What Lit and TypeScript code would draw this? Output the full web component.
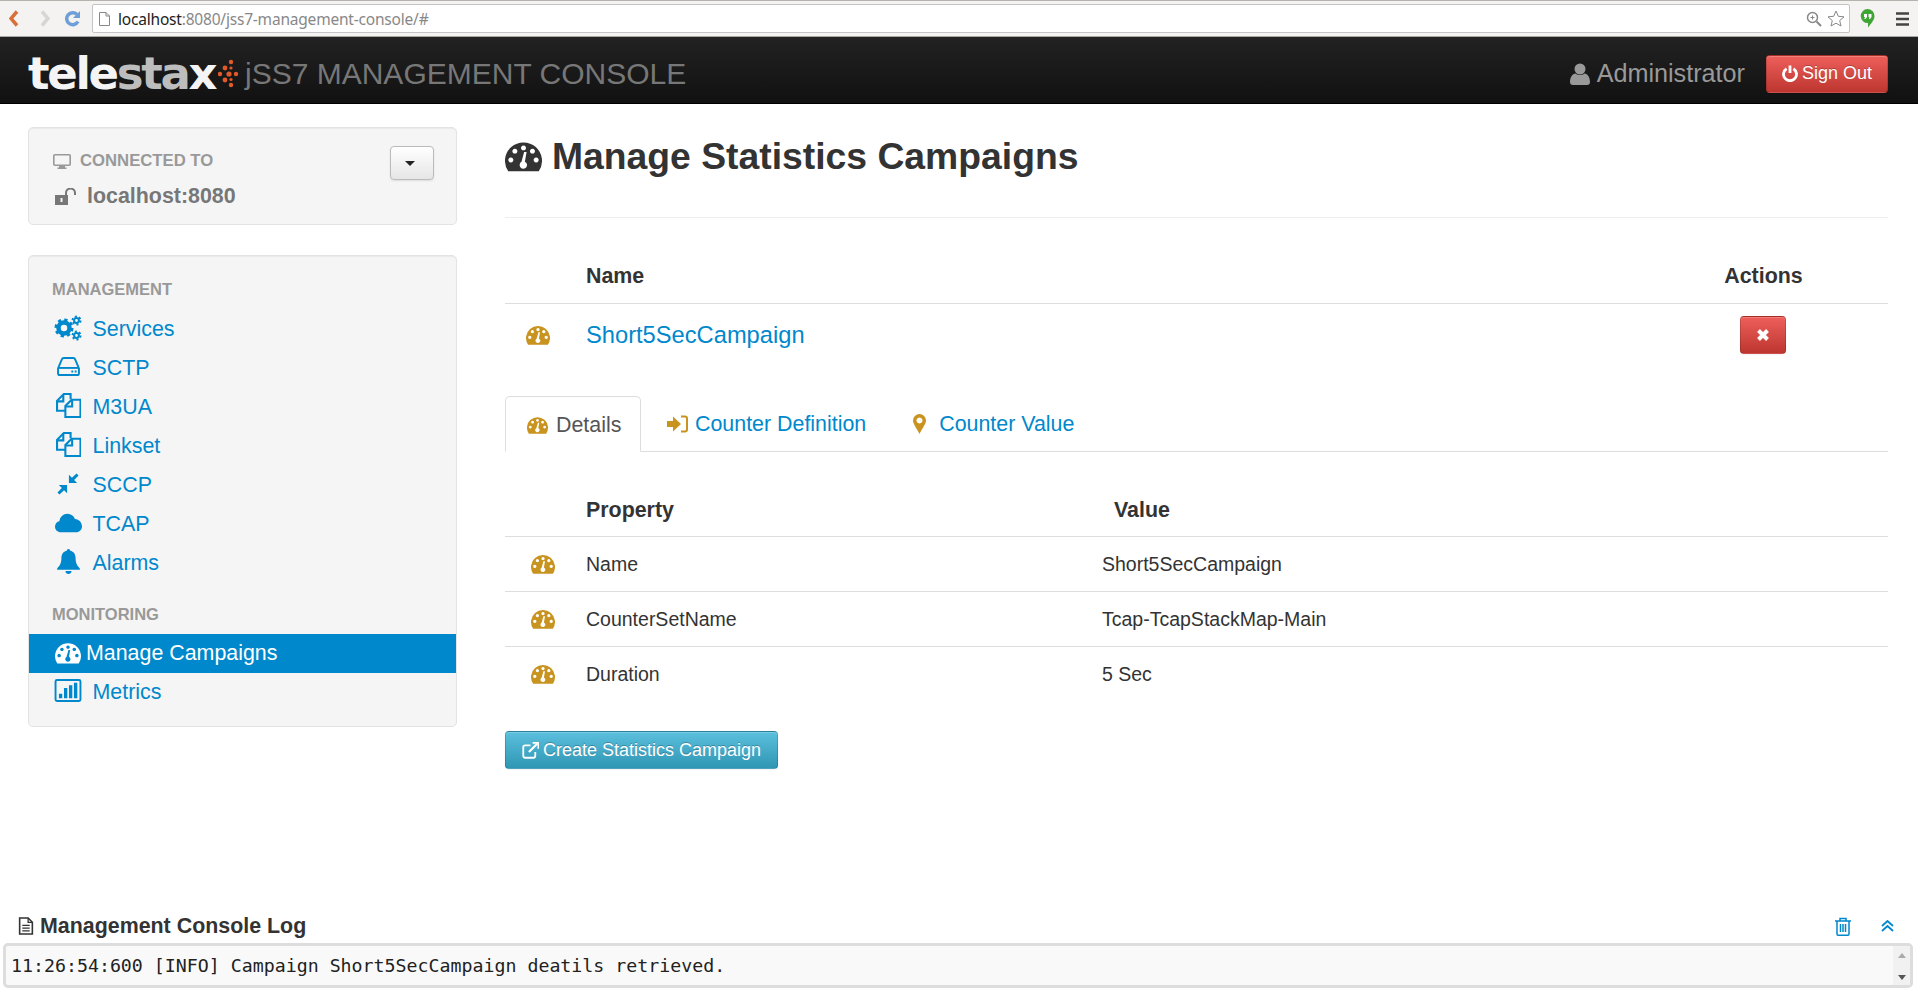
import {LitElement, css, html} from 'lit';
import {customElement} from 'lit/decorators.js';

const gauge = (cls = '') => html`<svg class="ic ${cls}" viewBox="0 0.9 24 19">
  <path
    fill="currentColor"
    fill-rule="evenodd"
    d="M2.1 19.7A12 12 0 1 1 21.9 19.7ZM12 2.9a1.6 1.6 0 1 0 .01 0ZM6.4 5a1.6 1.6 0 1 0 .01 0ZM17.8 5a1.6 1.6 0 1 0 .01 0ZM3.8 10.7a1.6 1.6 0 1 0 .01 0ZM20.2 10.7a1.6 1.6 0 1 0 .01 0ZM14 7.2L12.9 13.4a2.4 2.4 0 1 1-2.2 .1L12.4 7.2Z"
  />
</svg>`;

const cogs = html`<svg class="ic" width="28" height="26" viewBox="0 0 28 26" fill="none" stroke="currentColor">
  <circle cx="10" cy="13" r="5.5" stroke-width="4.5" />
  <circle cx="10" cy="13" r="8" stroke-width="3" stroke-dasharray="3.2 3.08" />
  <circle cx="22.5" cy="5.5" r="2.4" stroke-width="2" />
  <circle cx="22.5" cy="5.5" r="4" stroke-width="2" stroke-dasharray="2 2.19" />
  <circle cx="22.5" cy="20.5" r="2.4" stroke-width="2" />
  <circle cx="22.5" cy="20.5" r="4" stroke-width="2" stroke-dasharray="2 2.19" />
</svg>`;

const hdd = html`<svg class="ic" width="23" height="19" viewBox="1 1 24 20" fill="none" stroke="currentColor" stroke-width="2">
  <path d="M2 13L6 3.5C6.3 2.5 7 2 8 2H18C19 2 19.7 2.5 20 3.5L24 13V18C24 19.5 23 20 22 20H4C3 20 2 19.5 2 18Z" />
  <path d="M2 12.5H24" />
  <path d="M16 16.3h2M19.5 16.3h2" />
</svg>`;

const copy = html`<svg class="ic" width="25" height="25" viewBox="1 1 24 24" fill="none" stroke="currentColor" stroke-width="2">
  <path d="M10 18H2V8.5L8.5 2H15V7" />
  <path d="M8 2.5V9H2" />
  <path d="M10 24V13.5L16 7.5H24.5V24Z" />
  <path d="M16.5 8V14H10.5" />
</svg>`;

const compress = html`<svg class="ic" width="22" height="22" viewBox="1 1 24 24" fill="currentColor">
  <path d="M14 3V12H23L19.7 8.7 24.5 3.7 22.3 1.5 17.3 6.3Z" />
  <path d="M12 14V23L8.7 19.7 3.7 24.5 1.5 22.3 6.3 17.3 3 14Z" />
</svg>`;

const cloud = html`<svg class="ic" width="27" height="20" viewBox="0 2 28 19">
  <path fill="currentColor" d="M6 21C2.7 21 0 18.5 0 15.3 0 12.5 2 10.2 4.6 9.8 5 5.5 8.5 2 13 2 16.5 2 19.5 4.2 20.7 7.3 25 7.5 28 11 28 15 28 18.3 25.3 21 22 21Z" />
</svg>`;

const bell = html`<svg class="ic" width="23" height="25" viewBox="1 1 24 26.4">
  <path fill="currentColor" d="M13 1C14 1 14.8 1.8 14.8 2.8 18.5 3.5 20.5 6.5 20.5 10.5 20.5 16 22 18.5 25 21.5V23H1V21.5C4 18.5 5.5 16 5.5 10.5 5.5 6.5 7.5 3.5 11.2 2.8 11.2 1.8 12 1 13 1ZM9.8 24.2H16.2C16.2 26 14.8 27.4 13 27.4 11.2 27.4 9.8 26 9.8 24.2Z" />
</svg>`;

const chart = html`<svg class="ic" width="28" height="23" viewBox="0 0 28 24">
  <rect x="1" y="1" width="26" height="22" rx="1.5" fill="none" stroke="currentColor" stroke-width="2" />
  <path fill="currentColor" d="M4.5 15.5h3.5v4.5h-3.5zM9.8 9.5h3.5v10.5h-3.5zM15 6.5h3.5v13.5h-3.5zM20.2 4h3.5v16h-3.5z" />
</svg>`;

const nav = [
  {label: 'Services', icon: cogs},
  {label: 'SCTP', icon: hdd},
  {label: 'M3UA', icon: copy},
  {label: 'Linkset', icon: copy},
  {label: 'SCCP', icon: compress},
  {label: 'TCAP', icon: cloud},
  {label: 'Alarms', icon: bell},
];

const properties = [
  {name: 'Name', value: 'Short5SecCampaign'},
  {name: 'CounterSetName', value: 'Tcap-TcapStackMap-Main'},
  {name: 'Duration', value: '5 Sec'},
];

@customElement('app-root')
export class AppRoot extends LitElement {
  static styles = css`
    :host {
      display: flex;
      flex-direction: column;
      height: 990px;
      overflow: hidden;
      background: #fff;
      color: #333;
      font-family: 'Liberation Sans', Arial, sans-serif;
      font-size: 18px;
    }

    a {
      color: #08c;
      text-decoration: none;
    }

    .ic {
      display: block;
      flex: none;
    }

    .g38 {
      width: 37px;
      height: 30px;
    }

    .g26 {
      width: 26px;
      height: 21px;
    }

    .g24 {
      width: 24px;
      height: 19px;
    }

    .g21 {
      width: 21px;
      height: 17px;
    }

    /* browser chrome */
    .browser {
      display: flex;
      flex: none;
      align-items: center;
      box-sizing: border-box;
      height: 37px;
      padding-right: 9px;
      border-top: 1px solid #b5b3ae;
      border-bottom: 1px solid #a9a7a3;
      background: #f4f3f1;
    }

    .browser-nav {
      display: flex;
      flex: none;
      align-items: center;
      gap: 14px;
      width: 92px;
      padding-left: 9px;
      box-sizing: border-box;
    }

    .browser-nav .fwd {
      margin-left: 7px;
    }

    .urlbar {
      display: flex;
      flex: 1;
      align-items: center;
      gap: 5px;
      height: 27px;
      padding: 0 4px 0 6px;
      border: 1px solid #c4c4c4;
      border-radius: 2px;
      background: #fff;
      font-family: 'Noto Sans', 'Liberation Sans', sans-serif;
      font-size: 15.5px;
      color: #888;
    }

    .urlbar b {
      font-weight: 400;
      color: #222;
    }

    .url {
      flex: 1;
      letter-spacing: -0.2px;
      margin-left: 3px;
    }

    .browser-ext {
      display: flex;
      flex: none;
      align-items: center;
      gap: 21px;
      padding-left: 10px;
    }

    /* top navbar */
    .navbar {
      display: flex;
      flex: none;
      align-items: center;
      height: 67px;
      padding: 7px 30px 0 28px;
      box-sizing: border-box;
      background: linear-gradient(#222, #111);
      border-bottom: 1px solid #000;
    }

    .logo {
      display: flex;
      align-items: center;
      gap: 3px;
      width: 217px;
      font-family: 'DejaVu Sans', sans-serif;
      font-size: 45px;
      font-weight: 700;
      letter-spacing: -2.3px;
      line-height: 1;
      color: #f4f4f4;
    }

    .logo i {
      font-style: normal;
      color: #bdbdbd;
    }

    .brand {
      flex: 1;
      font-size: 30px;
      color: #777;
    }

    .user {
      display: flex;
      align-items: center;
      gap: 7px;
      margin-right: 21px;
      font-size: 25.2px;
      color: #999;
    }

    .btn {
      display: inline-flex;
      align-items: center;
      justify-content: center;
      box-sizing: border-box;
      border: 1px solid rgba(0, 0, 0, 0.15);
      border-radius: 4px;
      color: #fff;
      text-shadow: 0 -1px 0 rgba(0, 0, 0, 0.25);
      box-shadow: inset 0 1px 0 rgba(255, 255, 255, 0.2), 0 1px 2px rgba(0, 0, 0, 0.05);
    }

    .btn-danger {
      background: linear-gradient(#ee5f5b, #bd362f);
    }

    .signout {
      gap: 4px;
      width: 122px;
      height: 38px;
      font-size: 18px;
    }

    .delete {
      width: 46px;
      height: 38px;
    }

    /* page body */
    .page {
      display: flex;
      flex: 1;
      gap: 48px;
      padding: 23px 30px 0 28px;
      min-height: 0;
    }

    .sidebar {
      display: flex;
      flex: none;
      flex-direction: column;
      gap: 30px;
      width: 429px;
    }

    .well {
      box-sizing: border-box;
      border: 1px solid #e3e3e3;
      border-radius: 5px;
      background: #f5f5f5;
      box-shadow: inset 0 1px 1px rgba(0, 0, 0, 0.05);
    }

    .conn {
      display: flex;
      justify-content: space-between;
      height: 98px;
      padding: 18px 22px 0 24px;
      color: #777;
    }

    .conn-label {
      display: flex;
      align-items: center;
      gap: 9px;
      height: 20px;
      margin-top: 5px;
      font-size: 16.7px;
      font-weight: 700;
      color: #999;
    }

    .conn-host {
      display: flex;
      align-items: center;
      gap: 11px;
      margin: 13px 0 0 2px;
      font-size: 21.4px;
      font-weight: 700;
    }

    .caret-btn {
      width: 42px;
      height: 32px;
      border: 1px solid #bbb;
      border-radius: 4px;
      background: linear-gradient(#fff, #e6e6e6);
      box-shadow: 0 1px 2px rgba(0, 0, 0, 0.1);
      display: flex;
      align-items: center;
      justify-content: center;
    }

    .caret {
      width: 0;
      height: 0;
      margin-left: -4px;
      border-left: 5px solid transparent;
      border-right: 5px solid transparent;
      border-top: 5px solid #222;
    }

    .menu {
      height: 472px;
      padding-top: 22px;
    }

    .menu-head {
      height: 22px;
      padding-left: 23px;
      line-height: 22px;
      font-size: 16.5px;
      font-weight: 700;
      color: #999;
    }

    .monitoring {
      margin-top: 20px;
      margin-bottom: 9px;
    }

    .item {
      display: flex;
      align-items: center;
      gap: 10.5px;
      height: 39px;
      padding-left: 25px;
      font-size: 21.4px;
    }

    .item-icon {
      display: flex;
      justify-content: center;
      width: 28px;
      margin-bottom: 4px;
      color: #08c;
    }

    .items {
      padding-top: 10px;
    }

    .item.active {
      gap: 4px;
      background: #08c;
      color: #fff;
    }

    .item.active .item-icon {
      margin-bottom: 0;
      color: #fff;
    }

    /* main column */
    .main {
      flex: 1;
      min-width: 0;
    }

    .title {
      display: flex;
      align-items: center;
      gap: 10px;
      height: 91px;
      padding-bottom: 30px;
      box-sizing: border-box;
      border-bottom: 1px solid #eee;
    }

    h1 {
      margin: 0;
      font-size: 37.3px;
      line-height: 1;
      font-weight: 700;
      color: #333;
    }

    .grid-row {
      display: grid;
      align-items: center;
      box-sizing: border-box;
      border-bottom: 1px solid #ddd;
    }

    .gold {
      color: #c9931f;
    }

    .camps {
      margin-top: 29px;
    }

    .camps .grid-row {
      grid-template-columns: 66px 1fr 131px 59px;
    }

    .camps .head {
      height: 57px;
      padding-top: 2px;
      font-size: 21.4px;
      font-weight: 700;
    }

    .camps .body {
      height: 62px;
      border-bottom: none;
      font-size: 23.7px;
    }

    .center {
      justify-self: center;
    }

    .camps .name {
      padding-left: 15px;
    }

    .camps .delete {
      margin-right: 1px;
    }

    .icon-cell {
      justify-self: center;
    }

    .tabs {
      display: flex;
      align-items: flex-end;
      height: 56px;
      margin-top: 29px;
      border-bottom: 1px solid #ddd;
      font-size: 21.4px;
    }

    .tab {
      display: flex;
      align-items: center;
      gap: 7px;
      box-sizing: border-box;
      height: 56px;
      padding-top: 2px;
    }

    .tab.active {
      gap: 8px;
      width: 136px;
      margin-bottom: -1px;
      padding-left: 21px;
      border: 1px solid #ddd;
      border-bottom: 1px solid #fff;
      border-radius: 5px 5px 0 0;
      color: #555;
    }

    .tab.def {
      margin-left: 26px;
    }

    .tab.val {
      gap: 13px;
      margin-left: 47px;
    }

    .props .grid-row {
      grid-template-columns: 81px 516px 1fr;
      height: 55px;
      font-size: 19.5px;
    }

    .props .icon-cell {
      margin-right: 5px;
    }

    .props .head {
      height: 85px;
      padding-top: 32px;
      font-size: 21.4px;
      font-weight: 700;
    }

    .props .head .val-head {
      padding-left: 12px;
    }

    .props .last {
      border-bottom: none;
    }

    .create {
      gap: 4px;
      width: 273px;
      height: 38px;
      margin-top: 29px;
      background: linear-gradient(#5bc0de, #2f96b4);
      font-size: 18px;
    }

    /* console log */
    .log {
      flex: none;
      padding: 0 5px 2px 3px;
    }

    .log-head {
      display: flex;
      align-items: center;
      height: 28px;
      padding: 0 19px 0 15px;
      margin-bottom: 3px;
    }

    .log-title {
      display: flex;
      flex: 1;
      align-items: center;
      gap: 6px;
      font-size: 21.4px;
      font-weight: 700;
    }

    .log-actions {
      display: flex;
      align-items: center;
      gap: 30px;
      color: #08c;
    }

    .log-box {
      display: flex;
      box-sizing: border-box;
      height: 45px;
      border: 3px solid #ddd;
      border-radius: 5px;
      background: #f9f9f9;
    }

    .log-text {
      flex: 1;
      padding: 9px 0 0 5px;
      font-family: 'DejaVu Sans Mono', monospace;
      font-size: 18.25px;
      color: #222;
      white-space: pre;
    }

    .scrollbar {
      display: flex;
      flex-direction: column;
      align-items: center;
      justify-content: space-between;
      box-sizing: border-box;
      width: 17px;
      padding: 7px 0 5px;
      background: #f1f1f1;
    }

    .tri-up {
      border-left: 4px solid transparent;
      border-right: 4px solid transparent;
      border-bottom: 5px solid #aaa;
    }

    .tri-down {
      border-left: 4px solid transparent;
      border-right: 4px solid transparent;
      border-top: 5px solid #555;
    }
  `;

  renderBrowser() {
    return html`<div class="browser">
      <div class="browser-nav">
        <svg class="ic" width="10" height="17" viewBox="0 0 10 17"><path d="M8 1.5L2 8.5 8 15.5" fill="none" stroke="#d9703a" stroke-width="3.5" /></svg>
        <svg class="ic fwd" width="10" height="17" viewBox="0 0 10 17"><path d="M2 1.5L8 8.5 2 15.5" fill="none" stroke="#d8d6d2" stroke-width="3.5" /></svg>
        <svg class="ic" width="17" height="17" viewBox="0 0 17 17"><path d="M14 11.5A6 6 0 1 1 13 4.5" fill="none" stroke="#6e9fd6" stroke-width="3.5" /><path d="M16 1V8H9Z" fill="#6e9fd6" /></svg>
      </div>
      <div class="urlbar">
        <svg class="ic" width="11" height="14" viewBox="0 0 11 14"><path d="M.5.5H7L10.5 4V13.5H.5Z" fill="#fff" stroke="#888" /><path d="M7 .5V4H10.5" fill="none" stroke="#888" /></svg>
        <span class="url"><b>localhost</b>:8080/jss7-management-console/#</span>
        <svg class="ic" width="16" height="16" viewBox="0 0 16 16"><circle cx="6.5" cy="6.5" r="5" fill="none" stroke="#888" stroke-width="1.5" /><path d="M10.5 10.5L15 15" stroke="#888" stroke-width="2" /><path d="M4.5 6.5h4M6.5 4.5v4" stroke="#888" /></svg>
        <svg class="ic" width="18" height="17" viewBox="0 0 18 17"><path d="M9 1L11.3 6.3 17 6.8 12.7 10.6 14 16 9 13.2 4 16 5.3 10.6 1 6.8 6.7 6.3Z" fill="#fff" stroke="#888" /></svg>
      </div>
      <div class="browser-ext">
        <svg class="ic" width="15" height="19" viewBox="0 0 15 19"><path d="M7.5 0A7 7 0 0 1 14.5 7C14.5 11 11 14.5 8 18.5V14A7 7 0 0 1 7.5 0Z" fill="#3fa535" /><path d="M4 5h3v3l-1.5 2H4.3L5 8H4zM8.5 5h3v3L10 10H8.8L9.5 8h-1z" fill="#fff" /></svg>
        <svg class="ic" width="13" height="14" viewBox="0 0 13 14"><path d="M0 1.5h13M0 7h13M0 12.5h13" stroke="#444" stroke-width="2.5" /></svg>
      </div>
    </div>`;
  }

  renderNavbar() {
    return html`<div class="navbar">
      <div class="logo">
        <span>tele<i>sta</i>x</span>
        <svg class="ic" width="21" height="29" viewBox="0 0 21 29" fill="#e2592a">
          <circle cx="13" cy="3" r="2.2" /><circle cx="7" cy="9" r="2.4" /><circle cx="13" cy="9" r="1.6" />
          <circle cx="2" cy="15" r="2.2" /><circle cx="11" cy="15" r="2.6" /><circle cx="18" cy="15" r="2.2" />
          <circle cx="7" cy="21" r="2.4" /><circle cx="13" cy="20.5" r="1.6" /><circle cx="13" cy="26" r="2.2" />
        </svg>
      </div>
      <div class="brand">jSS7 MANAGEMENT CONSOLE</div>
      <div class="user">
        <svg class="ic" width="20" height="22" viewBox="0 0 20 22" fill="#999"><circle cx="10" cy="6" r="5.5" /><path d="M0 19C0 14 2.5 11 5.5 10.5 8 12.5 12 12.5 14.5 10.5 17.5 11 20 14 20 19 20 21 19 22 17 22H3C1 22 0 21 0 19Z" /></svg>
        Administrator
      </div>
      <a class="btn btn-danger signout">
        <svg class="ic" width="16" height="17" viewBox="0 0 16 17" fill="none" stroke="#fff" stroke-width="2.8"><path d="M4.6 3.7A6.5 6.5 0 1 0 11.4 3.7" /><path d="M8 .5V8" /></svg>
        Sign Out
      </a>
    </div>`;
  }

  renderSidebar() {
    return html`<div class="sidebar">
      <div class="well conn">
        <div>
          <div class="conn-label">
            <svg class="ic" width="18" height="15" viewBox="0 0 18 15"><rect x=".8" y=".8" width="16.4" height="10.4" rx="1" fill="none" stroke="#999" stroke-width="1.6" /><path d="M6 12h6v1.5h1.5V15h-9v-1.5H6Z" fill="#999" /></svg>
            CONNECTED TO
          </div>
          <div class="conn-host">
            <svg class="ic" width="21" height="17" viewBox="0 0 21 17" fill="#777"><path d="M0 7h13v10H0ZM5.5 10v4h2v-4Z" fill-rule="evenodd" /><path d="M11 7V5A4.5 4.5 0 0 1 20 5V7" fill="none" stroke="#777" stroke-width="2" /></svg>
            localhost:8080
          </div>
        </div>
        <div class="caret-btn"><span class="caret"></span></div>
      </div>
      <div class="well menu">
        <div class="menu-head">MANAGEMENT</div>
        <div class="items">
          ${nav.map(
            (n) => html`<a class="item">
              <span class="item-icon">${n.icon}</span>${n.label}
            </a>`
          )}
        </div>
        <div class="menu-head monitoring">MONITORING</div>
        <a class="item active"><span class="item-icon">${gauge('g26')}</span>Manage Campaigns</a>
        <a class="item"><span class="item-icon">${chart}</span>Metrics</a>
      </div>
    </div>`;
  }

  renderMain() {
    return html`<div class="main">
      <div class="title">${gauge('g38')}<h1>Manage Statistics Campaigns</h1></div>
      <div class="camps">
        <div class="grid-row head"><span></span><span class="name">Name</span><span class="center">Actions</span><span></span></div>
        <div class="grid-row body">
          <span class="icon-cell gold">${gauge('g24')}</span>
          <a class="name">Short5SecCampaign</a>
          <a class="btn btn-danger delete center">
            <svg class="ic" width="14" height="14" viewBox="0 0 14 14"><path d="M2.5 2.5L11.5 11.5M11.5 2.5L2.5 11.5" stroke="#fff" stroke-width="4" /></svg>
          </a>
          <span></span>
        </div>
      </div>
      <div class="tabs">
        <div class="tab active"><span class="gold">${gauge('g21')}</span>Details</div>
        <a class="tab def">
          <svg class="ic gold" width="21" height="18" viewBox="0 0 21 18" fill="currentColor"><path d="M0 6h6V1.5L14 9 6 16.5V12H0Z" /><path d="M14 1.5h4C19.5 1.5 20 2.5 20 3.5V14.5C20 15.5 19.5 16.5 18 16.5H14" fill="none" stroke="currentColor" stroke-width="2" /></svg>
          Counter Definition
        </a>
        <a class="tab val">
          <svg class="ic gold" width="13" height="20" viewBox="0 0 13 20" fill="currentColor"><path fill-rule="evenodd" d="M6.5 0A6.5 6.5 0 0 1 13 6.5C13 10 8.5 15.5 6.5 20 4.5 15.5 0 10 0 6.5A6.5 6.5 0 0 1 6.5 0ZM6.5 3.5A3 3 0 1 0 6.51 3.5Z" /></svg>
          Counter Value
        </a>
      </div>
      <div class="props">
        <div class="grid-row head"><span></span><span>Property</span><span class="val-head">Value</span></div>
        ${properties.map(
          (p, i) => html`<div class="grid-row ${i === properties.length - 1 ? 'last' : ''}">
            <span class="icon-cell gold">${gauge('g24')}</span>
            <span>${p.name}</span>
            <span>${p.value}</span>
          </div>`
        )}
      </div>
      <a class="btn create">
        <svg class="ic" width="17" height="17" viewBox="0 0 16 16" fill="none" stroke="#fff" stroke-width="1.7"><path d="M12.5 9.5V13C12.5 14 12 14.8 11 14.8H3C2 14.8 1.2 14 1.2 13V5C1.2 4 2 3.2 3 3.2H8" /><path d="M6.5 9.5L14.5 1.5" stroke-width="2" /><path d="M10 .8H15.5V6.3" stroke-width="1.8" /></svg>
        Create Statistics Campaign
      </a>
    </div>`;
  }

  renderLog() {
    return html`<div class="log">
      <div class="log-head">
        <div class="log-title">
          <svg class="ic" width="16" height="18" viewBox="0 0 14 17" fill="none" stroke="#333" stroke-width="1.5"><path d="M1 1H9L13 5V16H1Z" /><path d="M3.5 8h7M3.5 10.5h7M3.5 13h7M9 1V5H13" stroke-width="1.2" /></svg>
          Management Console Log
        </div>
        <div class="log-actions">
          <svg class="ic" width="16" height="19" viewBox="0 0 16 19" fill="none" stroke="currentColor" stroke-width="1.5"><path d="M0 4H16M5 4V1.5H11V4" /><path d="M2 4V17C2 17.8 2.5 18.2 3 18.2H13C13.5 18.2 14 17.8 14 17V4" /><path d="M5.5 7V15M8 7V15M10.5 7V15" /></svg>
          <svg class="ic" width="13" height="12" viewBox="0 0 13 12" fill="none" stroke="currentColor" stroke-width="1.8"><path d="M1 6L6.5 1 12 6M1 11L6.5 6 12 11" /></svg>
        </div>
      </div>
      <div class="log-box">
        <div class="log-text">11:26:54:600 [INFO] Campaign Short5SecCampaign deatils retrieved.</div>
        <div class="scrollbar"><span class="tri-up"></span><span class="tri-down"></span></div>
      </div>
    </div>`;
  }

  render() {
    return html`
      ${this.renderBrowser()} ${this.renderNavbar()}
      <div class="page">${this.renderSidebar()} ${this.renderMain()}</div>
      ${this.renderLog()}
    `;
  }
}
